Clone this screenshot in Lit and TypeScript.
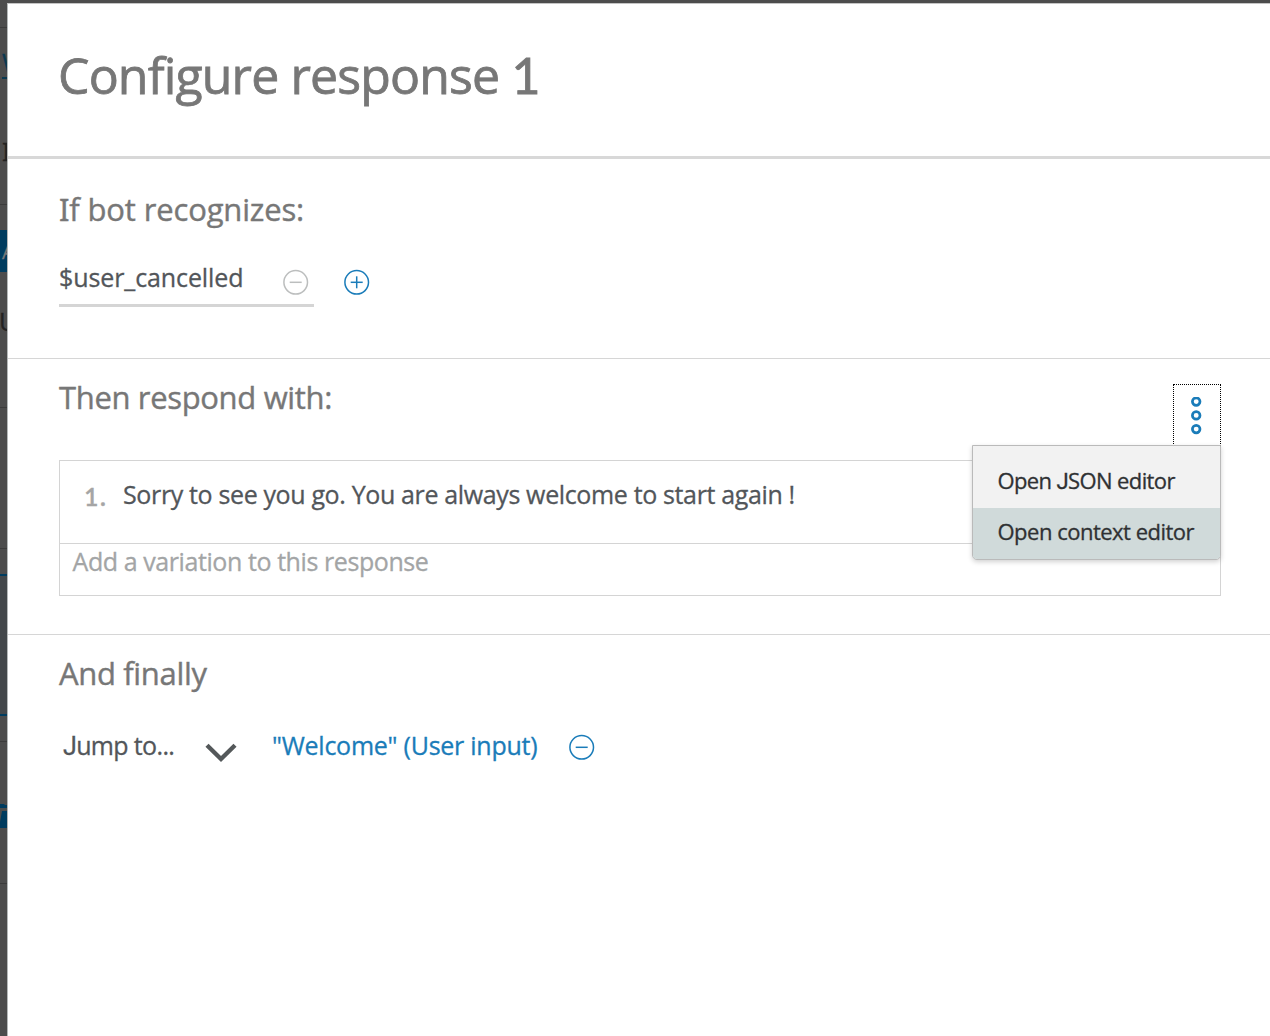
import { LitElement, html, css, svg } from "lit";
import { customElement, property } from "lit/decorators.js";

@customElement("round-icon")
class RoundIcon extends LitElement {
  @property() kind = "minus";
  static styles = css`
    :host { display: block; width: 26px; height: 26px; }
    .icon { display: block; fill: none; stroke: currentColor; stroke-width: 1.5; }
  `;
  render() {
    return html`<svg class="icon" width="26" height="26" viewBox="0 0 26 26">
      <circle cx="12.7" cy="13.3" r="11.8" />
      <path d="M6.7 13.3H18.7" />
      ${this.kind === "plus" ? svg`<path d="M12.7 7.3V19.3" />` : ""}
    </svg>`;
  }
}

@customElement("page-behind")
class PageBehind extends LitElement {
  static styles = css`
    :host {
      display: flex; flex-direction: column; width: 7px; height: 1036px; overflow: hidden;
      background: #4c4c4c; font: 25px/30px "Open Sans", "Liberation Sans", sans-serif; color: #222;
      box-sizing: border-box; flex: none;
    }
    .cell { flex: none; box-sizing: border-box; border-bottom: 1px solid #3b3b3b; overflow: hidden; white-space: nowrap; }
    .top { height: 28px; }
    .tabs { height: 177px; padding: 18px 0 0 2px; }
    .link { height: 31px; line-height: 32px; color: #0a3850; border-bottom: 2px solid #0a3850; }
    .intro { margin-top: 52px; height: 40px; font-family: "Noto Sans", sans-serif; line-height: 40px; }
    .actions { height: 203px; padding-top: 25px; }
    .button { height: 42px; line-height: 43px; background: #003c5f; color: #777; padding-left: 2px; font-size: 20px; }
    .user { margin-top: 31px; line-height: 36px; margin-left: -1px; }
    .gap { height: 141px; }
    .spacer { height: 25px; border-bottom: 0; }
    .selected { height: 142px; background: #43474a; border-top: 2px solid #003c5f; border-bottom: 2px solid #003c5f; }
    .rest { height: 26px; }
    .folder { height: 142px; padding-top: 62px; }
    .shape { display: block; }
  `;
  render() {
    return html`
      <div class="cell top"></div>
      <div class="cell tabs"><div class="link">W</div><div class="intro">I</div></div>
      <div class="cell actions"><div class="button">A</div><div class="user">U</div></div>
      <div class="cell gap"></div>
      <div class="cell spacer"></div>
      <div class="cell selected"></div>
      <div class="cell rest"></div>
      <div class="cell folder">
        <svg class="shape" width="7" height="24" viewBox="0 0 7 24">
          <path fill="#003c5f" d="M0 0H4L5 1H7V4H0ZM2 7H7V24H0V18Z" />
        </svg>
      </div>
    `;
  }
}

@customElement("overflow-menu")
class OverflowMenu extends LitElement {
  @property({ attribute: false }) items: { label: unknown; cls: string }[] = [];
  static styles = css`
    :host { display: block; position: relative; width: 48px; height: 62px; }
    .trigger {
      display: flex; align-items: flex-start; box-sizing: border-box; width: 48px; height: 64px; padding: 12px 0 0 17px;
      border: 1px dotted #000; background: none; border-radius: 0; margin: 0;
    }
    .dots { display: block; fill: none; stroke: #1a7cb9; stroke-width: 2.7; }
    .menu {
      position: absolute; top: 61px; right: 0; z-index: 1; box-sizing: border-box; width: 249px; height: 115px;
      padding-top: 11px; border: 1px solid #bababa; border-radius: 0 0 5px 5px; background: #f2f2f2;
      box-shadow: 0 2px 5px rgba(0, 0, 0, 0.18); overflow: hidden;
      font: 22px/30px "Open Sans", "Liberation Sans", sans-serif; color: #2f3133;
    }
    .item { height: 51px; box-sizing: border-box; padding: 8px 0 0 24.5px; white-space: nowrap; }
    .active { background: #d0dada; }
    .json { letter-spacing: -0.62px; }
    .context { letter-spacing: -0.5px; }
    .hook { font-family: Roboto, sans-serif; }
  `;
  render() {
    return html`
      <button class="trigger" aria-label="Response options">
        <svg class="dots" width="12" height="40" viewBox="0 0 12 40">
          <circle cx="5.2" cy="4.6" r="3.8" /><circle cx="5.2" cy="18.4" r="3.8" /><circle cx="5.2" cy="32.1" r="3.8" />
        </svg>
      </button>
      <div class="menu">${this.items.map((i) => html`<div class="item ${i.cls}">${i.label}</div>`)}</div>
    `;
  }
}

@customElement("app-root")
class AppRoot extends LitElement {
  static styles = css`
    :host {
      display: flex; width: 1270px; height: 1036px; overflow: hidden; background: #4c4c4c;
      font: 25px/34px "Open Sans", "Liberation Sans", sans-serif; color: #52565a; white-space: nowrap;
      -webkit-text-stroke: 0.3px currentColor;
    }
    .dialog {
      flex: 1; box-sizing: border-box; margin-top: 3px; background: #fff;
      border-top: 1px solid #c4c4c4; border-left: 1px solid #b4b8b8;
    }
    .header { box-sizing: border-box; height: 155px; padding: 37px 0 0 50px; border-bottom: 3px solid #d8d8d8; }
    .title {
      margin: 0; font-size: 50px; font-weight: 400; line-height: 68px; letter-spacing: -0.85px; color: #777;
      -webkit-text-stroke-width: 0.8px;
    }
    .section { box-sizing: border-box; padding: 17px 49px 0 51px; border-bottom: 1px solid #d6d6d6; }
    .condition { height: 200px; padding-top: 29px; }
    .respond { height: 276px; }
    .finally { border-bottom: 0; }
    .heading {
      margin: 0; font-size: 31px; font-weight: 400; line-height: 42px; letter-spacing: -0.34px; color: #777;
      -webkit-text-stroke-width: 0.4px;
    }
    .recognizes { letter-spacing: -0.15px; }
    .serif-cap { font-family: "Noto Sans", sans-serif; }
    .digit { font-family: Lato, sans-serif; }
    .hook { font-family: Roboto, sans-serif; }
    .row { display: flex; }
    .rule { margin-top: 30px; }
    .field { display: flex; box-sizing: border-box; width: 255px; height: 47px; border-bottom: 3px solid #d5d5d5; }
    .value { width: 224px; letter-spacing: -0.1px; }
    .icon-slot { margin-top: 9px; }
    .muted { color: #bcbebe; }
    .add { margin: 9px 0 0 30px; }
    .blue { color: #1a7cb9; }
    .bar { display: flex; justify-content: space-between; height: 84px; }
    .options { margin-top: 8px; }
    .responses { box-sizing: border-box; height: 136px; border: 1px solid #d4d4d4; }
    .answer { box-sizing: border-box; display: flex; height: 83px; padding: 16px 0 0 24px; border-bottom: 1px solid #d4d4d4; }
    .number { width: 39px; padding-top: 2px; font-weight: 600; color: #a5a5a5; letter-spacing: 1px; }
    .text { letter-spacing: -0.36px; }
    .placeholder { padding-left: 12.5px; color: #a3a5a6; letter-spacing: -0.42px; }
    .jump { margin-top: 34px; padding-left: 4px; }
    .action { width: 142px; letter-spacing: -0.65px; }
    .chevron { display: block; margin-top: 15px; fill: none; stroke: #54585a; stroke-width: 4.4; }
    .target { box-sizing: border-box; width: 331.5px; padding-left: 35px; letter-spacing: -0.25px; }
    .remove { margin-top: 5.5px; }
  `;
  render() {
    return html`
      <page-behind></page-behind>
      <main class="dialog">
        <header class="header"><h1 class="title">Configure response <span class="digit">1</span></h1></header>
        <section class="section condition">
          <h2 class="heading recognizes"><span class="serif-cap">I</span>f bot recognizes:</h2>
          <div class="row rule">
            <div class="field">
              <span class="value">$user_cancelled</span>
              <round-icon class="icon-slot muted"></round-icon>
            </div>
            <round-icon class="add blue" kind="plus"></round-icon>
          </div>
        </section>
        <section class="section respond">
          <div class="bar">
            <h2 class="heading">Then respond with:</h2>
            <overflow-menu class="options" .items=${[
              { label: html`Open <span class="hook">J</span>SON editor`, cls: "json" },
              { label: "Open context editor", cls: "context active" },
            ]}></overflow-menu>
          </div>
          <div class="responses">
            <div class="answer">
              <span class="number"><span class="digit">1</span>.</span>
              <span class="text">Sorry to see you go. You are always welcome to start again !</span>
            </div>
            <div class="placeholder">Add a variation to this response</div>
          </div>
        </section>
        <section class="section finally">
          <h2 class="heading">And finally</h2>
          <div class="row jump">
            <span class="action"><span class="hook">J</span>ump to...</span>
            <svg class="chevron" width="32" height="22" viewBox="0 0 32 22"><path d="M2 2.2L16 16L30 2.2" /></svg>
            <span class="target blue">"Welcome" (User input)</span>
            <round-icon class="remove blue"></round-icon>
          </div>
        </section>
      </main>
    `;
  }
}
